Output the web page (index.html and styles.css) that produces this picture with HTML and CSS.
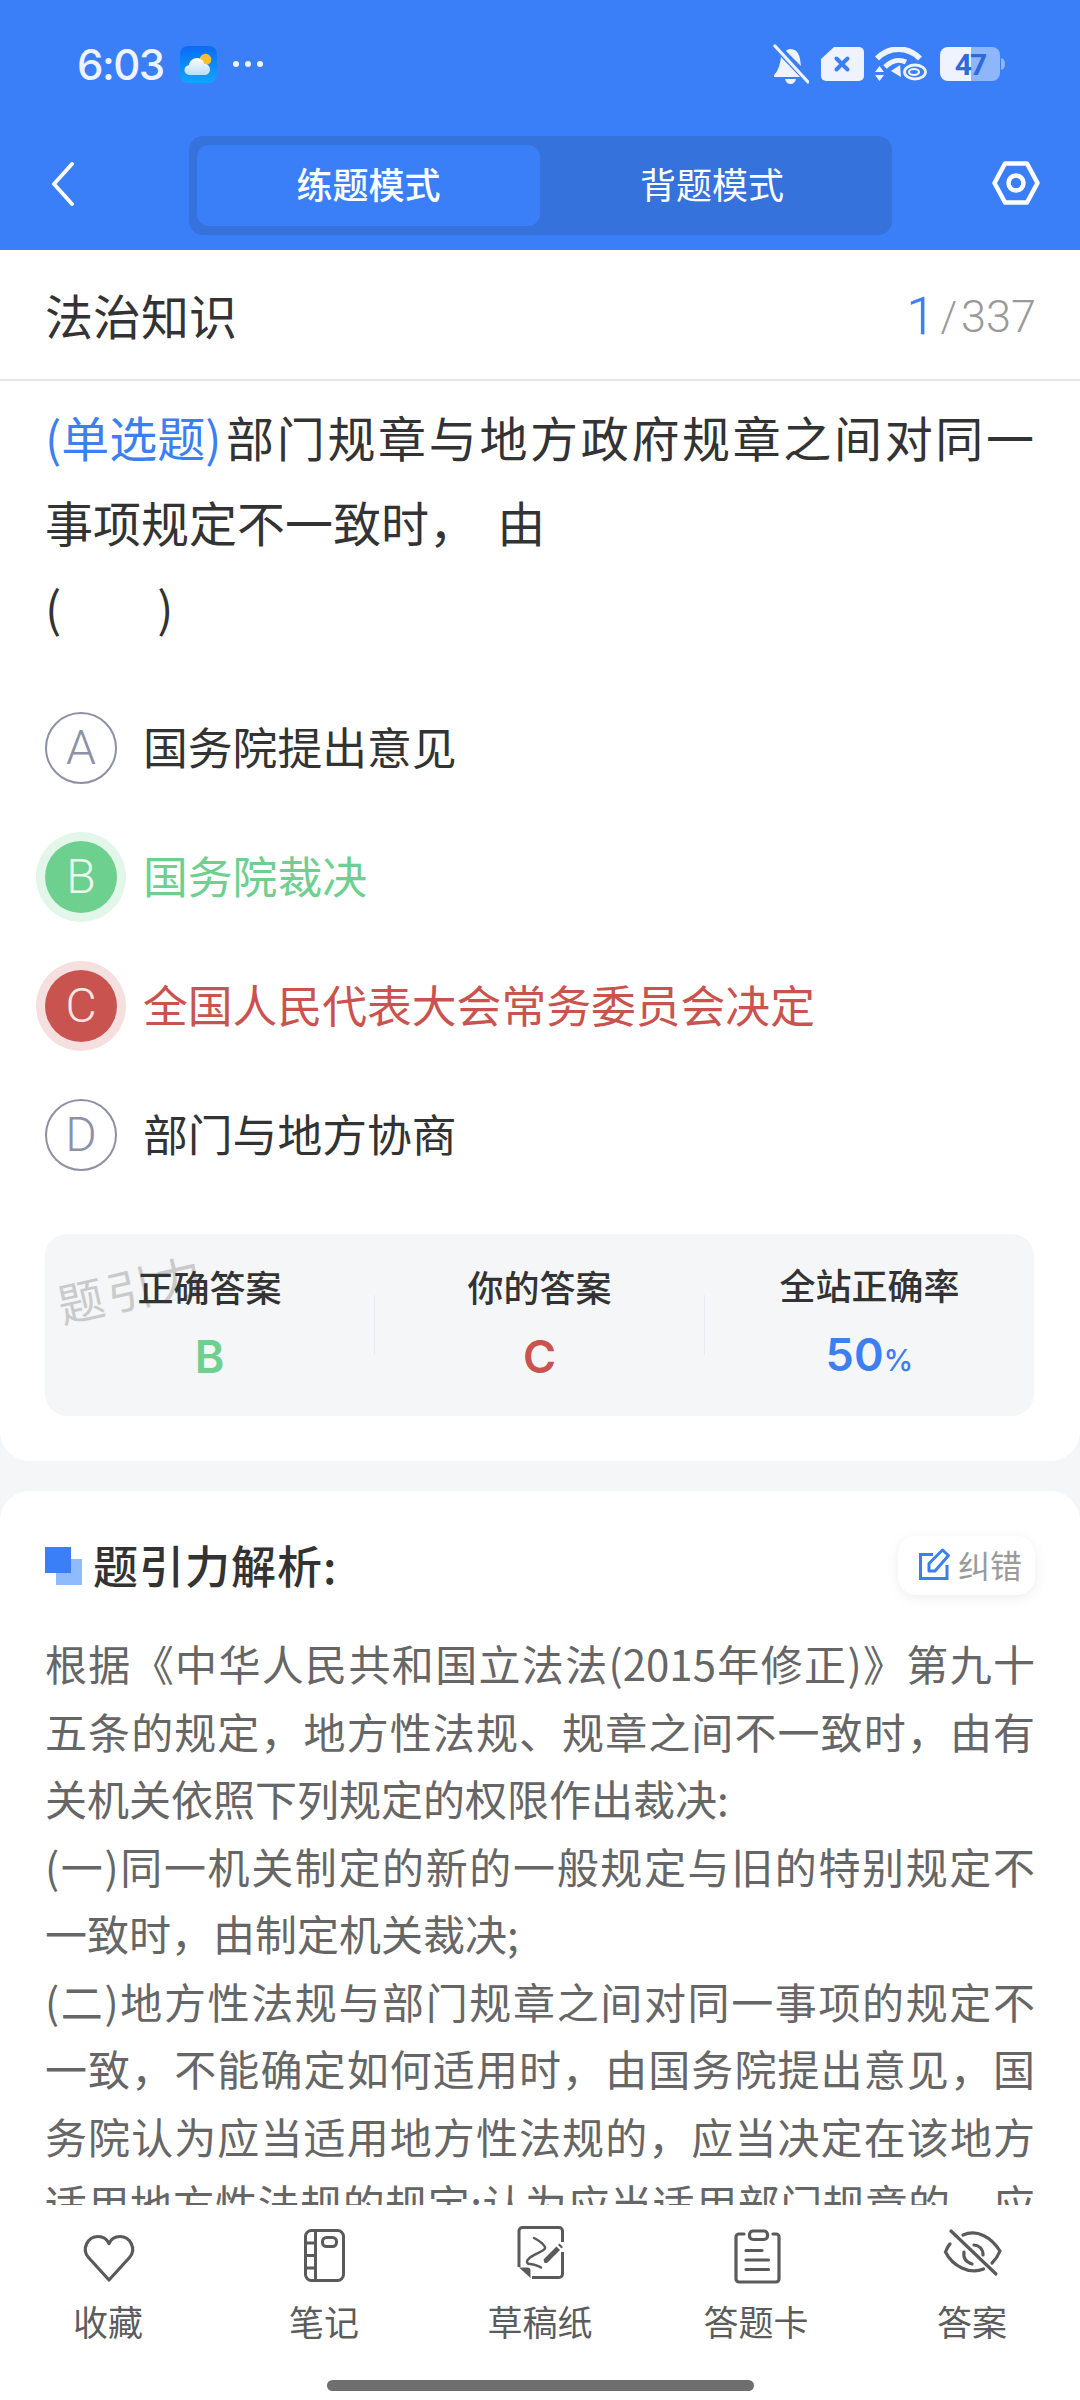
FILE: index.html
```html
<!DOCTYPE html>
<html lang="zh-CN">
<head>
<meta charset="utf-8">
<title>练题模式</title>
<link rel="stylesheet" href="styles.css">
</head>
<body>
<div class="page">
  <header class="header">
    <div class="status">
      <span class="time">6:03</span>
      <svg class="weather" viewBox="0 0 37 37">
        <defs>
          <linearGradient id="wbg" x1="0" y1="0" x2="0" y2="1"><stop offset="0" stop-color="#0a6cf5"/><stop offset="1" stop-color="#12a4ff"/></linearGradient>
          <linearGradient id="wcl" x1="0" y1="0" x2="0" y2="1"><stop offset="0" stop-color="#ffffff"/><stop offset="1" stop-color="#b9def8"/></linearGradient>
        </defs>
        <rect width="37" height="37" rx="8" fill="url(#wbg)"/>
        <circle cx="25.5" cy="13.5" r="5.8" fill="#fbc02d"/>
        <path d="M10 29c-3.300 0-5.500-2.300-5.500-5 0-2.600 1.900-4.500 4.300-4.800C9.700 15 13 12 17 12c3.700 0 6.500 2.400 7.300 6 3.400 0 5.700 2.400 5.700 5.400 0 3.200-2.500 5.600-5.700 5.600z" fill="url(#wcl)"/>
      </svg>
      <span class="dots"><i></i><i></i><i></i></span>
      <span class="status-right">
        <svg class="st-bell" viewBox="0 0 36 40">
          <path d="M17 5c6 0 9 4 10 10l1 7-15-15c1-1 2-2 4-2zM8 13l19 20H2c-1 0-1.500-1.500-.5-2.500C5 27 7 21 8 13zM12 35h11c-.5 3-3 5-5.500 5S12.500 38 12 35z" fill="#eef3ff"/>
          <path d="M2 2l33 36" stroke="#eef3ff" stroke-width="3.200" stroke-linecap="round"/>
        </svg>
        <svg class="st-sim" viewBox="0 0 43 34">
          <path d="M13 0h25a5 5 0 0 1 5 5v24a5 5 0 0 1-5 5H5a5 5 0 0 1-5-5V12z" fill="#eef3ff"/>
          <path d="M15.500 11.500l11 11M26.500 11.500l-11 11" stroke="#3b7ff8" stroke-width="4" stroke-linecap="round"/>
        </svg>
        <svg class="st-wifi" viewBox="0 0 53 34" fill="none">
          <path d="M3 11.500C15-1 34-1 46 11.500" stroke="#eef3ff" stroke-width="5.500"/>
          <path d="M11 20c7-7 15-8 21-5" stroke="#eef3ff" stroke-width="5"/>
          <path d="M17 24l9-6 1 12z" fill="#eef3ff"/>
          <path d="M5.500 19l4.500 6h-9zM1 28h9l-4.500 6z" fill="#eef3ff"/>
          <ellipse cx="41" cy="25" rx="10.500" ry="7" stroke="#eef3ff" stroke-width="2.800"/>
          <ellipse cx="40" cy="25" rx="5" ry="3" stroke="#eef3ff" stroke-width="2.200"/>
        </svg>
        <svg class="st-batt" viewBox="0 0 65 34">
          <path d="M31 0v34H8a8 8 0 0 1-8-8V8a8 8 0 0 1 8-8z" fill="#eef3ff"/>
          <path d="M31 0h21a8 8 0 0 1 8 8v18a8 8 0 0 1-8 8H31z" fill="#8fb6fb"/>
          <path d="M61 11c2.500.5 4 2.500 4 6s-1.500 5.500-4 6z" fill="#8fb6fb"/>
          <text class="batt-text" x="30" y="27.500">47</text>
        </svg>
      </span>
    </div>
    <nav class="topnav">
      <svg class="back" viewBox="0 0 24 44" fill="none"><path d="M21 2L3 22l18 20" stroke="#fff" stroke-width="3.800" stroke-linecap="round" stroke-linejoin="round"/></svg>
      <div class="tabs">
        <span class="tab tab-active">练题模式</span>
        <span class="tab">背题模式</span>
      </div>
      <svg class="hex" viewBox="0 0 48 44" fill="none"><path d="M13 2.500h22L45.500 22 35 41.500H13L2.500 22z" stroke="#fff" stroke-width="4.500" stroke-linejoin="round"/><circle cx="24" cy="22" r="7.500" stroke="#fff" stroke-width="4.500"/></svg>
    </nav>
  </header>

  <main class="scroll">
    <section class="card card-question">
      <div class="title-row">
        <h1 class="title">法治知识</h1>
        <div class="counter"><span class="counter-now">1</span><span class="counter-sep">/</span><span class="counter-total">337</span></div>
      </div>
      <p class="question"><span class="q-tag">(单选题)</span>部门规章与地方政府规章之间对同一事项规定不一致时，&nbsp;&thinsp;由<br>(　　)</p>
      <ul class="options">
        <li class="option"><span class="badge">A</span><span class="option-text">国务院提出意见</span></li>
        <li class="option option-right"><span class="badge">B</span><span class="option-text">国务院裁决</span></li>
        <li class="option option-wrong"><span class="badge">C</span><span class="option-text">全国人民代表大会常务委员会决定</span></li>
        <li class="option"><span class="badge">D</span><span class="option-text">部门与地方协商</span></li>
      </ul>
      <div class="stats">
        <span class="watermark">题引力</span>
        <div class="stat"><div class="stat-label">正确答案</div><div class="stat-value v-right">B</div></div>
        <span class="divider"></span>
        <div class="stat"><div class="stat-label">你的答案</div><div class="stat-value v-wrong">C</div></div>
        <span class="divider"></span>
        <div class="stat"><div class="stat-label">全站正确率</div><div class="stat-value v-rate">50<small>%</small></div></div>
      </div>
    </section>

    <section class="card card-analysis">
      <div class="analysis-head">
        <h2 class="analysis-title"><span class="squares"><i></i><i></i></span><span class="analysis-name">题引力解析:</span></h2>
        <button class="report">
          <svg class="report-icon" viewBox="0 0 34 34" fill="none">
            <path d="M16 7.500H3.500v24h26.500V18" stroke="#3b7ff0" stroke-width="3"/>
            <path d="M12 24v-7.500L25.500 3l6 5.500L18 24z" stroke="#3b7ff0" stroke-width="3" stroke-linejoin="round"/>
          </svg>
          <span>纠错</span>
        </button>
      </div>
      <div class="analysis-text">
        <p class="analysis-para">根据《中华人民共和国立法法(2015年修正)》第九十五条的规定，地方性法规、规章之间不一致时，由有关机关依照下列规定的权限作出裁决:</p>
        <p class="analysis-para">(一)同一机关制定的新的一般规定与旧的特别规定不一致时，由制定机关裁决;</p>
        <p class="analysis-para analysis-cut">(二)地方性法规与部门规章之间对同一事项的规定不一致，不能确定如何适用时，由国务院提出意见，国务院认为应当适用地方性法规的，应当决定在该地方适用地方性法规的规定;认为应当适用部门规章的，应</p>
      </div>
    </section>
  </main>

  <footer class="bottom">
    <div class="tools">
      <div class="tool">
        <svg class="tool-icon" viewBox="0 0 80 80" fill="none"><path d="M41 63L20.500 40.500C13 32 20 19.500 30 19.500c5 0 9 2.500 11 7 2-4.500 6-7 11-7 10 0 17 12.500 9.500 21z" stroke="#5a5a5a" stroke-width="3.200" stroke-linejoin="round"/></svg>
        <span class="tool-label">收藏</span>
      </div>
      <div class="tool">
        <svg class="tool-icon" viewBox="0 0 80 80" fill="none" stroke="#5a5a5a" stroke-width="3"><rect x="21.500" y="13.500" width="38" height="50" rx="6"/><path d="M31.500 14v49M22 26h9.500M22 38.500h9.500M22 51h9.500"/><rect x="38.500" y="20.500" width="14" height="9" rx="4"/></svg>
        <span class="tool-label">笔记</span>
      </div>
      <div class="tool">
        <svg class="tool-icon" viewBox="0 0 80 80" fill="none">
          <path d="M32 60.500h27a3.500 3.500 0 0 0 3.500-3.500V35M62.500 25V14a3.500 3.500 0 0 0-3.500-3.500H22.500a3.500 3.500 0 0 0-3.500 3.500v36" stroke="#5a5a5a" stroke-width="3"/>
          <path d="M19 50.500h8.500a3 3 0 0 1 3 3V61z" fill="#5a5a5a"/>
          <path d="M34 21c5 2.500 9 5.500 11 9 1.500 3.500-9 6-15 10.500-4 3.500-4 6 0 6.500 4 .5 8 1.500 11 3.500" stroke="#5a5a5a" stroke-width="2.400" stroke-linecap="round"/>
          <path d="M44.500 46l-1 -3.500 13-13 3.500 3.500-13 13z" fill="#5a5a5a"/>
          <path d="M58 28l1.500-1.500 3.500 3.500-1.500 1.500z" fill="#5a5a5a"/>
        </svg>
        <span class="tool-label">草稿纸</span>
      </div>
      <div class="tool">
        <svg class="tool-icon" viewBox="0 0 80 80" fill="none" stroke="#5a5a5a" stroke-width="3.200" stroke-linecap="round">
          <path d="M28 17h-5a3 3 0 0 0-3 3v42a3 3 0 0 0 3 3h37a3 3 0 0 0 3-3V20a3 3 0 0 0-3-3h-3"/>
          <rect x="33.500" y="14" width="18" height="8.500" rx="3.500"/>
          <path d="M30 33.500h16M30 43h22.500M30 52.500h22.500"/>
        </svg>
        <span class="tool-label">答题卡</span>
      </div>
      <div class="tool">
        <svg class="tool-icon" viewBox="0 0 80 80" fill="none" stroke="#5a5a5a" stroke-width="3.200" stroke-linecap="round">
          <path d="M19 14l45 43"/>
          <path d="M31 18c14-6 28 2 37 16-2 5-5 9-8 12M18 27c-2 2-3.500 5-4.500 8 7 14 24 23 38 17"/>
          <path d="M32 35c-1 6 2 10 8 12M42 28c5 .5 9 4 9 10"/>
        </svg>
        <span class="tool-label">答案</span>
      </div>
    </div>
    <div class="home-row"><span class="home-bar"></span></div>
  </footer>
</div>
</body>
</html>
```

FILE: styles.css
```css
* { box-sizing: border-box; }
html, body { margin: 0; padding: 0; }
body {
  width: 1080px;
  height: 2400px;
  overflow: hidden;
  font-family: "Noto Sans CJK SC", "Noto Sans", sans-serif;
  color: #333;
  background: #f4f6f8;
}
h1, h2, p, ul { margin: 0; padding: 0; font-weight: 400; }
ul { list-style: none; }

.page { display: flex; flex-direction: column; height: 2400px; }

/* header */
.header { flex: none; height: 250px; background: #3b7ff8; color: #fff; }
.status { height: 128px; padding: 0 75px 0 77px; display: flex; align-items: center; }
.time { font-family: Inter, Roboto, sans-serif; font-weight: 500; font-size: 42px; letter-spacing: -1.5px; color: #eef3ff; }
.weather { width: 37px; height: 37px; margin-left: 16px; }
.dots { display: flex; gap: 6px; margin-left: 16px; }
.dots i { width: 6px; height: 6px; border-radius: 50%; background: #eef3ff; }
.status-right { margin-left: auto; display: flex; align-items: center; }
.st-bell { width: 36px; height: 40px; margin-right: 1px; }
.st-sim { width: 43px; height: 34px; margin-left: 11px; }
.st-wifi { width: 53px; height: 34px; margin-left: 10px; }
.st-batt { width: 65px; height: 34px; margin-left: 13px; overflow: visible; }
.batt-text { font-family: Roboto, sans-serif; font-weight: 700; font-size: 30px; letter-spacing: -2px; fill: #2f6bd8; text-anchor: middle; }

.topnav { height: 99px; margin-top: 8px; display: grid; grid-template-columns: 189px 703px 1fr; align-items: center; }
.back { width: 24px; height: 44px; margin: 0 0 3px 51px; }
.tabs { height: 99px; padding: 9px 8px; background: #3672dc; border-radius: 14px; display: grid; grid-template-columns: 343px 344px; }
.tab { display: flex; align-items: center; justify-content: center; padding-bottom: 5px; font-size: 36px; color: #fff; border-radius: 12px; }
.tab-active { background: #3b7ff8; font-weight: 500; }
.hex { width: 48px; height: 44px; margin: 0 0 5px 100px; }

/* scrolling area */
.scroll { flex: 1; min-height: 0; overflow: hidden; }
.card { background: #fff; }
.card-question { border-radius: 0 0 30px 30px; padding-bottom: 45px; }
.card-analysis { margin-top: 30px; border-radius: 30px 30px 0 0; padding: 45px 45px 0; }

.title-row { height: 131px; padding: 0 44px 0 45px; display: flex; align-items: center; justify-content: space-between; border-bottom: 2px solid #e6e6e6; }
.title { font-size: 48px; line-height: 60px; color: #333; margin-bottom: 2px; }
.counter { display: flex; align-items: center; margin-top: 3px; font-family: Roboto, sans-serif; font-weight: 300; }
.counter-now { font-size: 52px; color: #3b7ff0; -webkit-text-stroke: .4px #3b7ff0; }
.counter-sep { font-size: 42px; color: #9a9a9a; margin: 0 4px 0 5px; }
.counter-total { font-size: 45px; color: #9a9a9a; }

.question { margin-top: 13px; padding: 0 46px 0 45px; font-size: 48px; line-height: 85px; text-align: justify; color: #333; }
.q-tag { display: inline-block; margin-right: 2px; color: #3b7ff0; }

.options { margin-top: 34px; padding: 0 45px; }
.option { height: 129px; display: flex; align-items: center; font-size: 44.8px; color: #333; }
.option-text { margin-bottom: 4px; }
.badge { flex: none; width: 72px; height: 72px; margin-right: 26px; border-radius: 50%; border: 2px solid #8e90a5; display: flex; align-items: center; justify-content: center; font-family: Roboto, sans-serif; font-weight: 300; font-size: 48px; color: #8e90a5; }
.option-right { color: #6dd08f; }
.option-right .badge { background: #6dd08f; border: 0; color: #e9faef; box-shadow: 0 0 0 9px #e2f6ea; }
.option-wrong { color: #c9534f; }
.option-wrong .badge { background: #c9534f; border: 0; color: #fbe6e5; box-shadow: 0 0 0 9px #f6e0df; }

.stats { position: relative; margin: 35px 46px 0 45px; height: 182px; background: #f4f6f8; border-radius: 22px; display: flex; align-items: center; overflow: hidden; }
.stat { position: relative; flex: 1; text-align: center; }
.stat-label { font-size: 36px; line-height: 46px; font-weight: 500; color: #333; }
.stat-value { margin-top: 18px; font-family: Inter, Roboto, sans-serif; font-weight: 600; font-size: 45px; line-height: 60px; }
.stat-value small { font-size: 30px; font-weight: 500; }
.v-right { color: #6dd08f; }
.v-wrong { color: #c9534f; }
.v-rate { color: #3b7ff0; }
.divider { flex: none; width: 1px; height: 60px; background: #e9ebee; }
.watermark { position: absolute; left: 13px; top: 37px; font-size: 46px; letter-spacing: 4px; color: #cacaca; transform: rotate(-13deg); transform-origin: left center; white-space: nowrap; }

.analysis-head { height: 59px; display: flex; align-items: center; justify-content: space-between; }
.analysis-title { display: flex; align-items: center; font-size: 45px; font-weight: 500; color: #333; }
.analysis-name { margin-bottom: 3px; letter-spacing: 1px; }
.squares { position: relative; width: 48px; height: 38px; }
.squares i { position: absolute; display: block; width: 26px; height: 26px; }
.squares i:first-child { left: 11px; top: 12px; background: #8fbafc; }
.squares i:last-child { left: 0; top: 0; background: #3b7ff8; }
.report { width: 137px; height: 59px; padding: 0 0 4px 19px; border: 0; border-radius: 18px; background: #fff; box-shadow: 0 3px 14px rgba(0, 0, 0, .07); display: flex; align-items: center; gap: 7px; font-family: inherit; font-size: 32px; color: #9a9a9a; }
.report-icon { width: 34px; height: 34px; flex: none; }

.analysis-text { margin-top: 34px; font-size: 42px; line-height: 67.5px; color: #666; }
.analysis-para { text-align: justify; }
.analysis-cut { text-align-last: justify; }

/* bottom */
.bottom { flex: none; height: 195px; background: #fff; padding-top: 12px; }
.tools { display: grid; grid-template-columns: repeat(5, 216px); }
.tool { display: flex; flex-direction: column; align-items: center; }
.tool-icon { width: 80px; height: 80px; display: block; }
.tool-label { margin-top: 1px; font-size: 35px; line-height: 46px; color: #5c5c5c; }
.home-row { margin-top: 36px; display: flex; justify-content: center; }
.home-bar { width: 427px; height: 11px; border-radius: 6px; background: #6e6e6e; }
```
